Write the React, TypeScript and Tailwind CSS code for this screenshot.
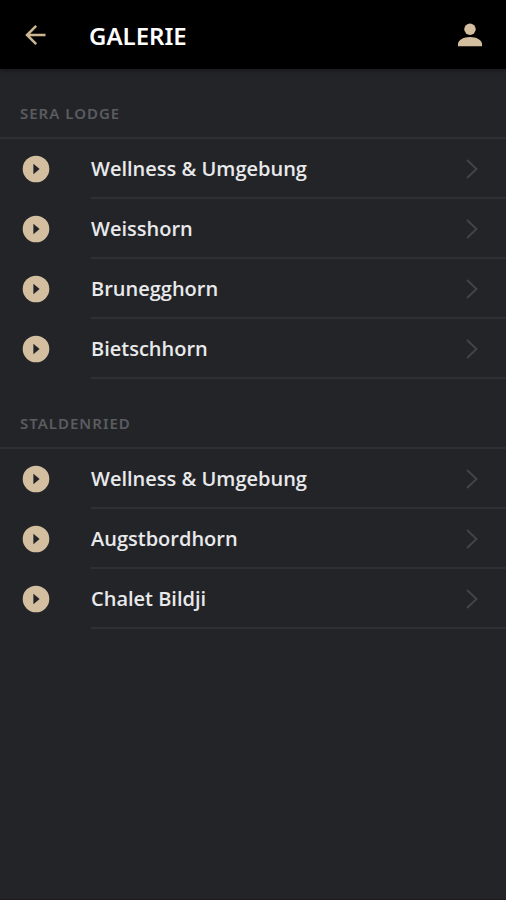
type Section = { title: string; items: string[] };

const sections: Section[] = [
  { title: "SERA LODGE", items: ["Wellness & Umgebung", "Weisshorn", "Brunegghorn", "Bietschhorn"] },
  { title: "STALDENRIED", items: ["Wellness & Umgebung", "Augstbordhorn", "Chalet Bildji"] },
];

function BackIcon() {
  return (
    <svg viewBox="0 0 24 24" className="size-6" fill="none" stroke="currentColor" strokeWidth="2.5" aria-hidden="true">
      <path d="M21.5 12H3M12.2 2.8L3 12l9.2 9.2" />
    </svg>
  );
}

function PersonIcon() {
  return (
    <svg viewBox="0 0 24 24" className="size-6" fill="currentColor" aria-hidden="true">
      <circle cx="12" cy="6.2" r="5.7" />
      <path d="M0 23.3v-2.2C0 16.8 6 14 12 14s12 2.8 12 7.1v2.2z" />
    </svg>
  );
}

function PlayIcon() {
  return (
    <svg viewBox="0 0 28 28" className="size-7 shrink-0 text-[#d3bfa0]" aria-hidden="true">
      <circle cx="14" cy="14" r="13.3" fill="currentColor" />
      <path d="M11.4 8.8v10.4L17.6 14z" fill="#232428" />
    </svg>
  );
}

function ChevronIcon() {
  return (
    <svg viewBox="0 0 12 20" className="h-5 w-3 shrink-0 text-[#414347]" fill="none" stroke="currentColor" strokeWidth="2" aria-hidden="true">
      <path d="M1 1l9.5 9L1 19" />
    </svg>
  );
}

export default function App() {
  return (
    <div className="flex min-h-screen flex-col border-b border-[#21191d] bg-[#232428] font-['Noto_Sans',sans-serif]">
      <header className="flex h-[69px] items-center bg-black px-6 shadow-[0_1px_6px_rgba(0,0,0,0.4)]">
        <button type="button" aria-label="Zurück" className="text-[#cdb793]">
          <BackIcon />
        </button>
        <h1 className="ml-[41px] flex-1 pt-0.5 text-2xl font-semibold text-white">GALERIE</h1>
        <button type="button" aria-label="Profil" className="text-[#d3bfa0]">
          <PersonIcon />
        </button>
      </header>
      <main>
        {sections.map((section) => (
          <section key={section.title}>
            <h2 className="flex h-[70px] items-end border-b-2 border-[#2f3034] px-5 pb-3 text-[15px]/6 font-semibold tracking-[1px] text-[#5a5c60]">
              {section.title}
            </h2>
            <ul>
              {section.items.map((item) => (
                <li key={item}>
                  <a href="#" className="flex h-[60px] items-center pl-[22px]">
                    <PlayIcon />
                    <span className="ml-[41px] flex flex-1 items-center justify-between self-stretch border-b-2 border-[#2f3034] pt-0.5 pr-7 font-['Open_Sans','Noto_Sans',sans-serif] text-xl font-semibold text-[#e8e9eb]">
                      {item}
                      <ChevronIcon />
                    </span>
                  </a>
                </li>
              ))}
            </ul>
          </section>
        ))}
      </main>
    </div>
  );
}
